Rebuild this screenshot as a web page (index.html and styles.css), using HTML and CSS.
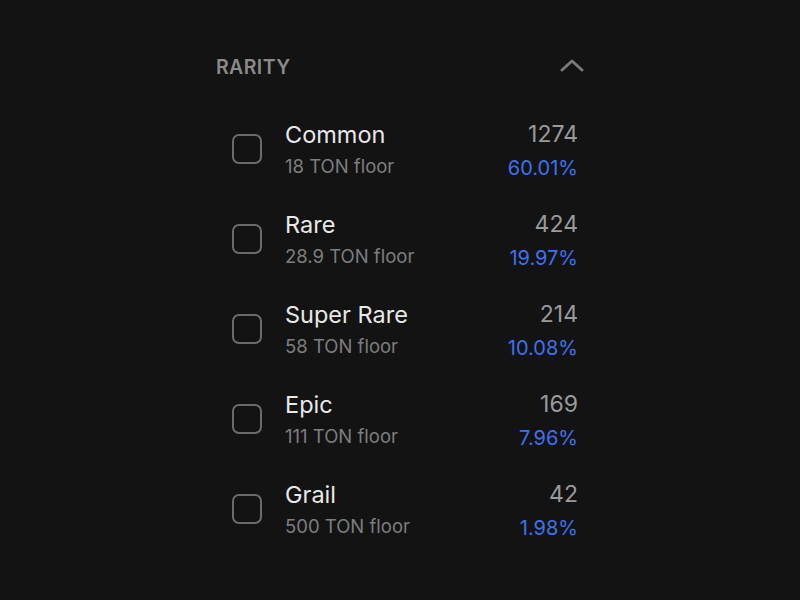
FILE: index.html
```html
<!DOCTYPE html>
<html>
<head>
<meta charset="utf-8">
<link rel="stylesheet" href="styles.css">
</head>
<body>
<div class="panel">
  <div class="header">
    <span class="title">RARITY</span>
    <svg class="chev" width="24" height="14" viewBox="0 0 24 14"><path d="M2 12 L12 3 L22 12" fill="none" stroke="#7a7a7a" stroke-width="3" stroke-linecap="round" stroke-linejoin="round"/></svg>
  </div>
  <div class="list">
    <div class="row">
      <span class="box"></span>
      <div class="info"><div class="name">Common</div><div class="floor">18 TON floor</div></div>
      <div class="stats"><div class="count">1274</div><div class="pct">60.01%</div></div>
    </div>
    <div class="row">
      <span class="box"></span>
      <div class="info"><div class="name">Rare</div><div class="floor">28.9 TON floor</div></div>
      <div class="stats"><div class="count">424</div><div class="pct">19.97%</div></div>
    </div>
    <div class="row">
      <span class="box"></span>
      <div class="info"><div class="name">Super Rare</div><div class="floor">58 TON floor</div></div>
      <div class="stats"><div class="count">214</div><div class="pct">10.08%</div></div>
    </div>
    <div class="row">
      <span class="box"></span>
      <div class="info"><div class="name">Epic</div><div class="floor">111 TON floor</div></div>
      <div class="stats"><div class="count">169</div><div class="pct">7.96%</div></div>
    </div>
    <div class="row">
      <span class="box"></span>
      <div class="info"><div class="name">Grail</div><div class="floor">500 TON floor</div></div>
      <div class="stats"><div class="count">42</div><div class="pct">1.98%</div></div>
    </div>
  </div>
</div>
</body>
</html>
```
FILE: styles.css
```css
html, body {
  margin: 0;
  padding: 0;
  background: #131314;
  width: 800px;
  height: 600px;
  overflow: hidden;
  font-family: Inter, "Noto Sans", sans-serif;
}
.panel {
  width: 368px;
  margin-left: 216px;
  padding-top: 54px;
}
.header {
  display: flex;
  justify-content: space-between;
  align-items: center;
  height: 26px;
}
.title {
  font-size: 19.5px;
  font-weight: 600;
  color: #8a8a8a;
  letter-spacing: 0.4px;
}
.chev {
  margin-top: -4px;
}
.list {
  padding-top: 40px;
  display: flex;
  flex-direction: column;
  gap: 28px;
}
.row {
  display: flex;
  align-items: center;
  padding-left: 16px;
  padding-right: 6px;
  height: 62px;
}
.box {
  width: 26px;
  height: 26px;
  border: 2.5px solid #6b6b6b;
  border-radius: 7px;
  margin-bottom: 4px;
  flex-shrink: 0;
}
.info {
  margin-left: 23px;
  flex: 1;
}
.name {
  font-size: 23.5px;
  color: #e8e8e8;
  line-height: 30px;
}
.floor {
  font-size: 18.5px;
  color: #7e7e7e;
  line-height: 32px;
}
.stats {
  text-align: right;
}
.count {
  font-size: 23px;
  color: #9a9a9a;
  line-height: 28px;
}
.pct {
  font-size: 20px;
  color: #3d72ee;
  line-height: 28px;
  padding-top: 6px;
}
```
